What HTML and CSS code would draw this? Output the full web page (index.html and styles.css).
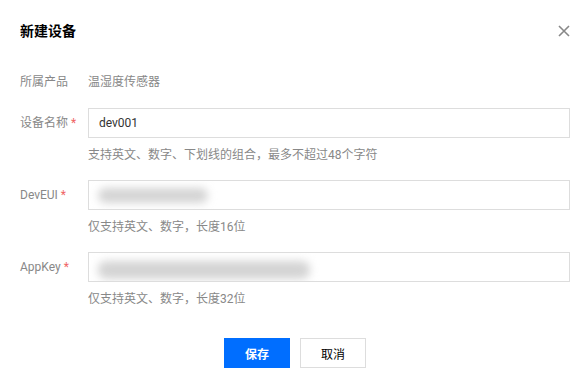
FILE: index.html
```html
<!DOCTYPE html>
<html lang="zh-CN">
<head>
  <meta charset="UTF-8">
  <meta name="viewport" content="width=device-width, initial-scale=1.0">
  <title>新建设备</title>
  <link rel="stylesheet" href="styles.css">
</head>
<body>
  <div class="dialog">
    <div class="dialog-header">
      <h3 class="dialog-title">新建设备</h3>
      <button class="close-btn" type="button" aria-label="关闭">
        <svg width="12" height="12" viewBox="0 0 12 12">
          <path d="M1 1L11 11M11 1L1 11" stroke="#888" stroke-width="1.6" fill="none"/>
        </svg>
      </button>
    </div>

    <form class="device-form">
      <div class="form-row plain">
        <label class="form-label">所属产品</label>
        <div class="form-value">温湿度传感器</div>
      </div>

      <div class="form-row">
        <label class="form-label" for="dev-name">设备名称<span class="req">*</span></label>
        <div class="form-control">
          <input type="text" id="dev-name" class="text-input" value="dev001">
          <div class="form-help">支持英文、数字、下划线的组合，最多不超过48个字符</div>
        </div>
      </div>

      <div class="form-row">
        <label class="form-label" for="dev-eui">DevEUI<span class="req">*</span></label>
        <div class="form-control">
          <div class="text-input masked">
            <span class="blur blur-short"></span>
          </div>
          <div class="form-help">仅支持英文、数字，长度16位</div>
        </div>
      </div>

      <div class="form-row">
        <label class="form-label" for="app-key">AppKey<span class="req">*</span></label>
        <div class="form-control">
          <div class="text-input masked">
            <span class="blur blur-long"></span>
          </div>
          <div class="form-help">仅支持英文、数字，长度32位</div>
        </div>
      </div>

      <div class="dialog-footer">
        <button type="submit" class="btn btn-primary">保存</button>
        <button type="button" class="btn btn-default">取消</button>
      </div>
    </form>
  </div>
</body>
</html>
```

FILE: styles.css
```css
body {
  margin: 0;
  padding: 0;
  background-color: #fff;
  font-family: Roboto, "Noto Sans CJK SC", sans-serif;
  font-size: 12px;
  color: #333;
}
.dialog {
  width: 585px;
  height: 389px;
  padding: 20px 15px 0 20px;
  box-sizing: border-box;
}
.dialog-header {
  display: flex;
  justify-content: space-between;
  align-items: center;
  height: 22px;
}
.dialog-title {
  margin: 0;
  font-size: 14px;
  font-weight: bold;
  color: #000;
  line-height: 22px;
}
.close-btn {
  border: none;
  background: none;
  padding: 0;
  width: 12px;
  height: 12px;
  display: flex;
  cursor: pointer;
}
.device-form {
  margin-top: 31px;
}
.form-row {
  display: flex;
  margin-bottom: 16px;
}
.form-row.plain {
  margin-bottom: 17px;
  line-height: 18px;
}
.form-label {
  width: 68px;
  flex-shrink: 0;
  color: #888;
  line-height: 30px;
}
.form-row.plain .form-label {
  line-height: 18px;
}
.form-value {
  color: #888;
}
.req {
  color: #f06464;
  margin-left: 3px;
}
.form-control {
  width: 482px;
}
.text-input {
  display: block;
  width: 100%;
  height: 30px;
  box-sizing: border-box;
  border: 1px solid #ddd;
  padding: 0 10px;
  font-family: Roboto, "Noto Sans CJK SC", sans-serif;
  font-size: 12px;
  color: #333;
  outline: none;
}
.masked {
  position: relative;
  overflow: hidden;
}
.blur {
  position: absolute;
  top: 7px;
  left: 9px;
  height: 15px;
  background-color: #d4d4d4;
  border-radius: 8px;
  filter: blur(4px);
}
.blur-short {
  width: 110px;
}
.blur-long {
  top: 8px;
  width: 212px;
  height: 18px;
}
.form-help {
  margin-top: 8px;
  line-height: 18px;
  color: #888;
}
.dialog-footer {
  display: flex;
  justify-content: center;
  gap: 10px;
  margin-top: 30px;
}
.btn {
  width: 66px;
  height: 30px;
  font-family: Roboto, "Noto Sans CJK SC", sans-serif;
  font-size: 12px;
  cursor: pointer;
}
.btn-primary {
  background-color: #006eff;
  color: #fff;
  border: none;
  font-weight: bold;
}
.btn-default {
  background-color: #fff;
  color: #000;
  border: 1px solid #ddd;
}
```
